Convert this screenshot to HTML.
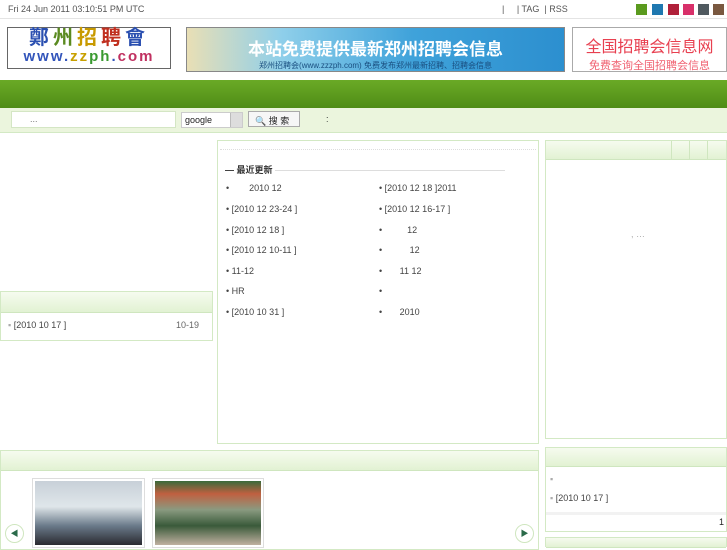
<!DOCTYPE html><html><head><meta charset="utf-8"><style>
*{margin:0;padding:0;box-sizing:border-box}
body{width:727px;height:545px;overflow:hidden;background:#fff;font-family:"Liberation Sans","Noto Sans CJK SC",sans-serif;font-size:9px;color:#333;position:relative}
.a{position:absolute}
.hd{background:linear-gradient(#f6fbef,#e2f2d3);border-bottom:1px solid #cfe6bf}
.box{border:1px solid #d3e9c4}
.li{position:absolute;font-size:9px;color:#444}
</style></head><body>
<div class="a" style="left:8px;top:4px;color:#555">Fri 24 Jun 2011 03:10:51 PM UTC</div>
<div class="a" style="left:502px;top:4px;color:#555">|&nbsp;&nbsp;&nbsp;&nbsp;&nbsp;| TAG &nbsp;| RSS</div>
<div class="a" style="left:636px;top:4px;width:11px;height:11px;background:#5a9a1e"></div>
<div class="a" style="left:652px;top:4px;width:11px;height:11px;background:#1f78b0"></div>
<div class="a" style="left:668px;top:4px;width:11px;height:11px;background:#b0203a"></div>
<div class="a" style="left:683px;top:4px;width:11px;height:11px;background:#d8306a"></div>
<div class="a" style="left:698px;top:4px;width:11px;height:11px;background:#505a60"></div>
<div class="a" style="left:713px;top:4px;width:11px;height:11px;background:#7a5840"></div>
<div class="a" style="left:0;top:18px;width:727px;height:1px;background:#e4e4e4"></div>
<div class="a" style="left:7px;top:27px;width:164px;height:42px;border:1px solid #666;background:#fff;font-size:20px;line-height:21px;text-align:center;font-weight:bold">
<div style="color:#2a4fb0;letter-spacing:4px">鄭<span style="color:#5a8a20">州</span><span style="color:#c89a00">招</span><span style="color:#c03020">聘</span>會</div>
<div style="font-size:15px;line-height:16px;color:#3355bb;letter-spacing:2px">www.<span style="color:#c8a000">zz</span><span style="color:#3a9a30">ph</span>.<span style="color:#c03060">com</span></div></div>
<div class="a" style="left:186px;top:27px;width:379px;height:45px;border:1px solid #888;background:linear-gradient(90deg,#e9dfb5 0%,#8fcfea 25%,#3fa2da 60%,#2c8fcf 100%);text-align:center;color:#fff">
<div style="font-size:17px;font-weight:bold;margin-top:7px">本站免费提供最新郑州招聘会信息</div>
<div style="font-size:8px;color:#1a4f80">郑州招聘会(www.zzzph.com) 免费发布郑州最新招聘、招聘会信息</div></div>
<div class="a" style="left:572px;top:27px;width:155px;height:45px;border:1px solid #aaa;background:#fff;text-align:center;color:#e84050">
<div style="font-size:16px;margin-top:5px">全国招聘会信息网</div>
<div style="font-size:11px;color:#f06070">免费查询全国招聘会信息</div></div>
<div class="a" style="left:0;top:80px;width:727px;height:28px;background:linear-gradient(#6aaa26,#4f8c16)"></div>
<div class="a" style="left:0;top:108px;width:727px;height:25px;background:#ebf5dd;border-bottom:1px solid #d3e9c4"></div>
<div class="a" style="left:11px;top:111px;width:165px;height:17px;background:#fff;border:1px solid #d4e6c4;padding:2px 0 0 18px;color:#777">...</div>
<div class="a" style="left:181px;top:112px;width:62px;height:16px;background:#fff;border:1px solid #ccc;padding:2px 3px;color:#222">google<span style="position:absolute;right:0;top:0;width:12px;height:14px;background:#ddd;border-left:1px solid #bbb"></span></div>
<div class="a" style="left:248px;top:111px;width:52px;height:16px;background:#f6f6f6;border:1px solid #aaa;padding:2px 6px;color:#222">🔍 搜 索</div>
<div class="a" style="left:326px;top:114px">:</div>
<div class="a box" style="left:0;top:291px;width:213px;height:50px"><div class="hd" style="height:21px"></div>
<div class="li" style="left:7px;top:28px"><span style="color:#aaa">▪</span> [2010 10 17 ]</div><div class="li" style="left:175px;top:28px;color:#666">10-19</div></div>
<div class="a box" style="left:217px;top:140px;width:322px;height:304px">
<div style="margin:8px 2px 0;border-top:1px dotted #ddd"></div>
<div class="li" style="left:7px;top:22px;font-weight:bold;color:#333">— 最近更新 <span style="display:inline-block;width:230px;height:1px;background:#ddd;vertical-align:middle"></span></div>
<div class="li" style="left:8px;top:42px">•&nbsp;&nbsp;&nbsp;&nbsp;&nbsp;&nbsp;&nbsp;&nbsp;2010 12</div>
<div class="li" style="left:8px;top:63px">• [2010 12 23-24 ]</div>
<div class="li" style="left:8px;top:84px">• [2010 12 18 ]</div>
<div class="li" style="left:8px;top:104px">• [2010 12 10-11 ]</div>
<div class="li" style="left:8px;top:125px">• 11-12</div>
<div class="li" style="left:8px;top:145px">• HR</div>
<div class="li" style="left:8px;top:166px">• [2010 10 31 ]</div>
<div class="li" style="left:161px;top:42px">• [2010 12 18 ]2011</div>
<div class="li" style="left:161px;top:63px">• [2010 12 16-17 ]</div>
<div class="li" style="left:161px;top:84px">•&nbsp;&nbsp;&nbsp;&nbsp;&nbsp;&nbsp;&nbsp;&nbsp;&nbsp;&nbsp;12</div>
<div class="li" style="left:161px;top:104px">•&nbsp;&nbsp;&nbsp;&nbsp;&nbsp;&nbsp;&nbsp;&nbsp;&nbsp;&nbsp;&nbsp;12</div>
<div class="li" style="left:161px;top:125px">•&nbsp;&nbsp;&nbsp;&nbsp;&nbsp;&nbsp;&nbsp;11 12</div>
<div class="li" style="left:161px;top:145px">•</div>
<div class="li" style="left:161px;top:166px">•&nbsp;&nbsp;&nbsp;&nbsp;&nbsp;&nbsp;&nbsp;2010</div></div>
<div class="a box" style="left:545px;top:140px;width:182px;height:299px"><div class="hd" style="height:19px;position:relative">
<div class="a" style="left:125px;top:0;width:1px;height:18px;background:#cfe6bf"></div>
<div class="a" style="left:143px;top:0;width:1px;height:18px;background:#cfe6bf"></div>
<div class="a" style="left:161px;top:0;width:1px;height:18px;background:#cfe6bf"></div></div>
<div class="li" style="left:85px;top:88px;color:#aaa">, …</div></div>
<div class="a box" style="left:545px;top:447px;width:182px;height:85px"><div class="hd" style="height:19px"></div>
<div class="li" style="left:4px;top:26px;color:#aaa">▪</div>
<div class="li" style="left:4px;top:45px"><span style="color:#aaa">▪</span> [2010 10 17 ]</div>
<div class="a" style="left:0;top:64px;width:180px;height:3px;background:#f2f2f2"></div>
<div class="li" style="left:173px;top:69px;color:#222">1</div></div>
<div class="a box" style="left:545px;top:537px;width:182px;height:10px"><div class="hd" style="height:10px"></div></div>
<div class="a box" style="left:0;top:450px;width:539px;height:100px"><div class="hd" style="height:20px"></div></div>
<div class="a" style="left:32px;top:478px;width:113px;height:70px;border:1px solid #ddd;padding:2px;background:#fff"><div style="width:100%;height:100%;background:linear-gradient(#c8d0d8 0%,#dfe6ea 40%,#6a7a8a 70%,#2a2a30 100%)"></div></div>
<div class="a" style="left:152px;top:478px;width:112px;height:70px;border:1px solid #ddd;padding:2px;background:#fff"><div style="width:100%;height:100%;background:linear-gradient(#3a6a3a 0%,#c06040 20%,#8a9a80 45%,#3a5a3a 70%,#c0b0a0 100%)"></div></div>
<div class="a" style="left:5px;top:524px;width:19px;height:19px;border-radius:50%;border:1px solid #cfe6bf;background:#fff;color:#2a6a4a;font-size:8px;text-align:center;line-height:17px">◀</div>
<div class="a" style="left:515px;top:524px;width:19px;height:19px;border-radius:50%;border:1px solid #cfe6bf;background:#fff;color:#2a6a4a;font-size:8px;text-align:center;line-height:17px">▶</div>
</body></html>
